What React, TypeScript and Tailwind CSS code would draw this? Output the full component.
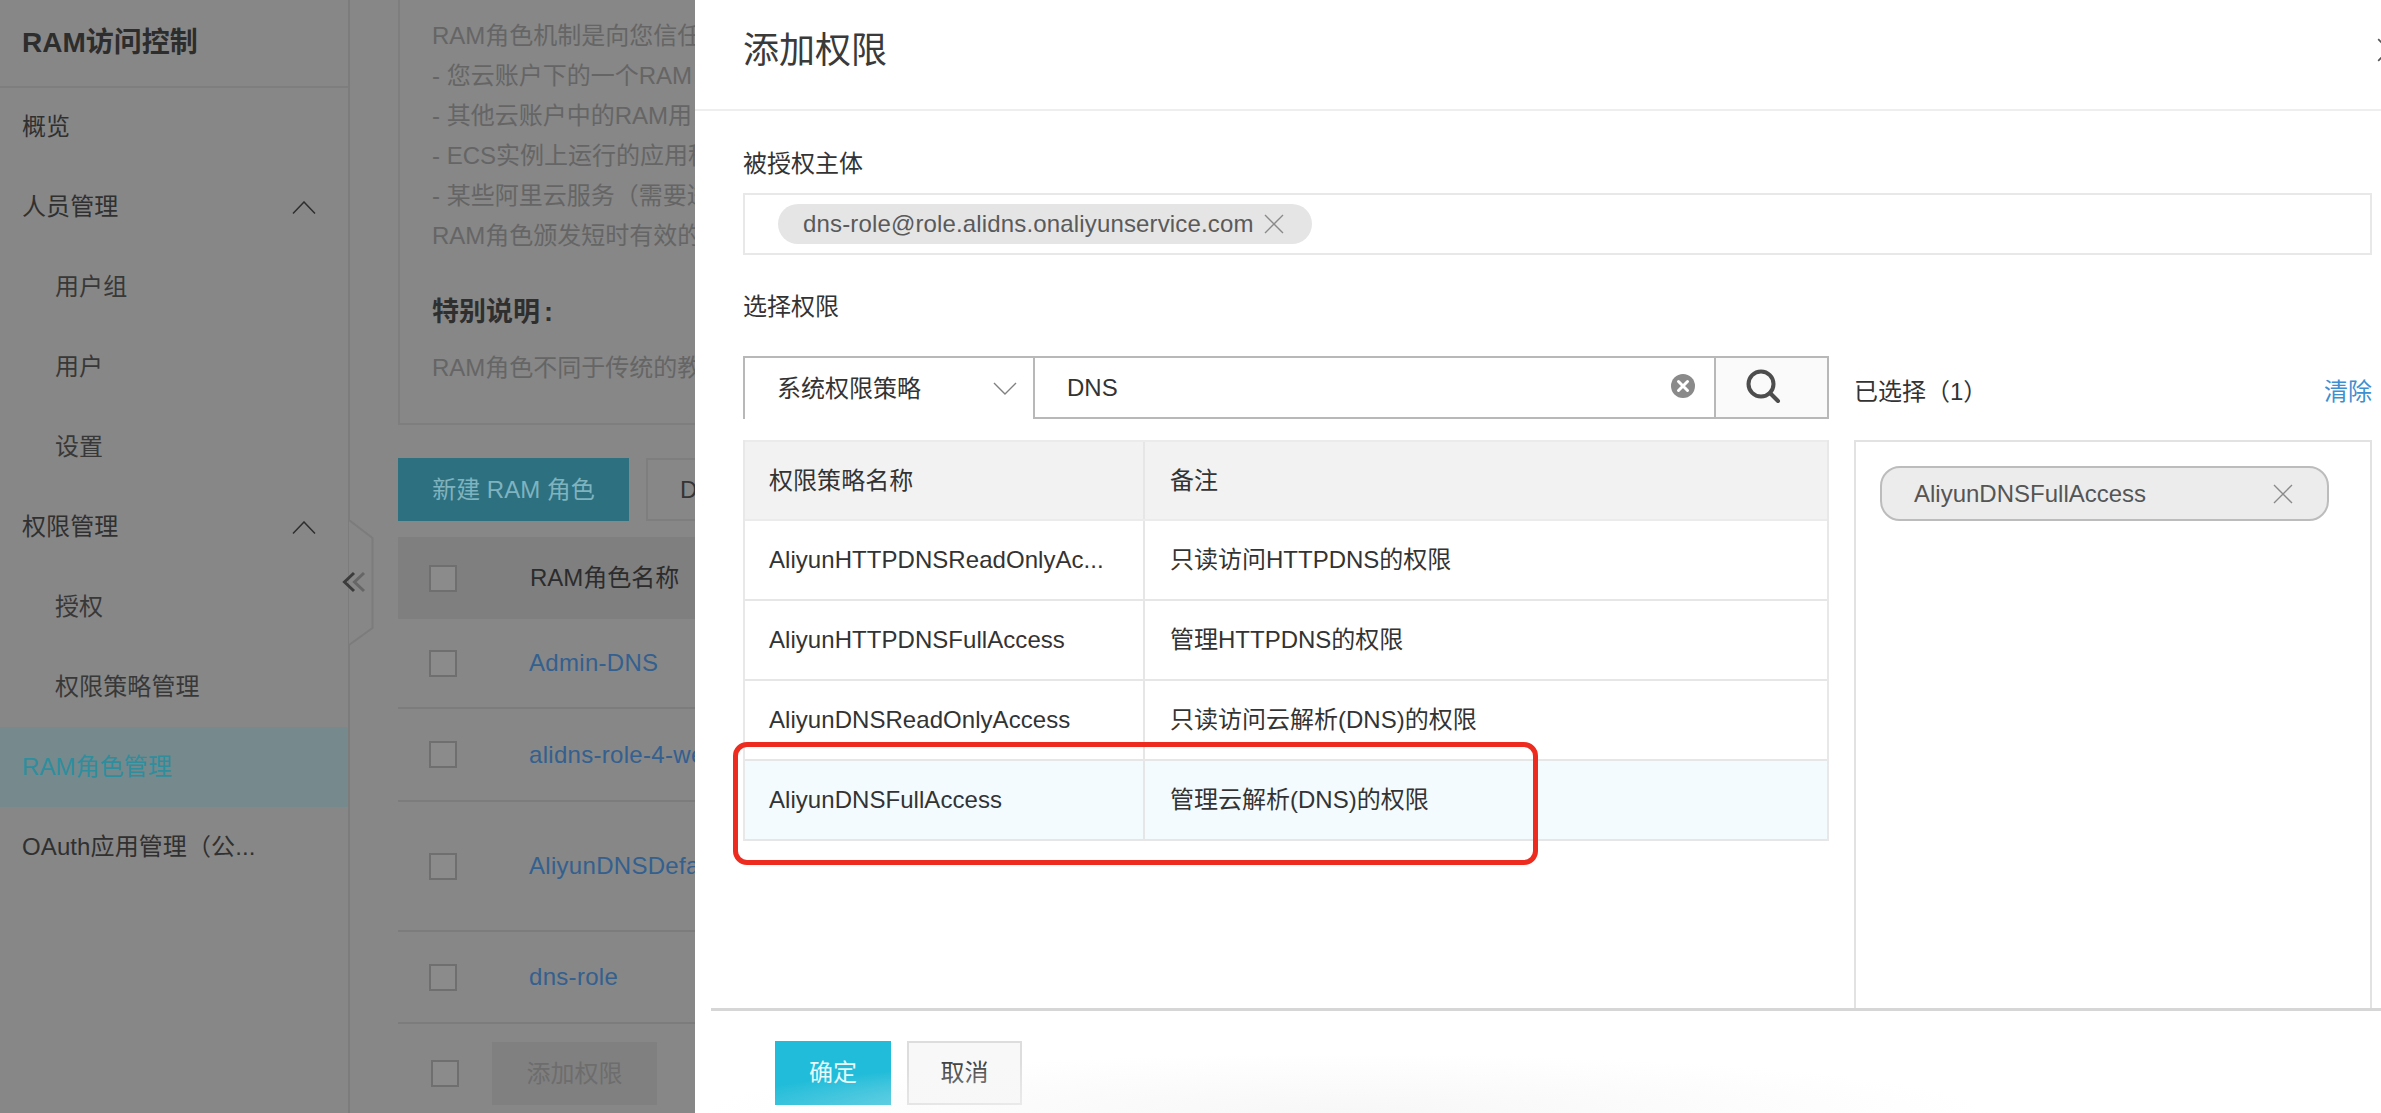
import type { ReactNode } from "react";

const MENU = [
  { label: "概览" },
  { label: "人员管理", open: true },
  { label: "用户组", sub: true },
  { label: "用户", sub: true },
  { label: "设置", sub: true },
  { label: "权限管理", open: true },
  { label: "授权", sub: true },
  { label: "权限策略管理", sub: true },
  { label: "RAM角色管理", active: true },
  { label: "OAuth应用管理（公..." },
];

const ROLES = [
  { name: "Admin-DNS", h: "h-[90px]" },
  { name: "alidns-role-4-web", h: "h-[93px]" },
  { name: "AliyunDNSDefaultRole", h: "h-[130px]" },
  { name: "dns-role", h: "h-[92px]" },
];

const POLICIES = [
  { name: "AliyunHTTPDNSReadOnlyAc...", note: "只读访问HTTPDNS的权限" },
  { name: "AliyunHTTPDNSFullAccess", note: "管理HTTPDNS的权限" },
  { name: "AliyunDNSReadOnlyAccess", note: "只读访问云解析(DNS)的权限" },
  { name: "AliyunDNSFullAccess", note: "管理云解析(DNS)的权限", picked: true },
];

// the drawer covers the rest of these lines
const INTRO = [
  "RAM角色机制是向您信任",
  "- 您云账户下的一个RAM",
  "- 其他云账户中的RAM用",
  "- ECS实例上运行的应用程",
  "- 某些阿里云服务（需要进",
  "RAM角色颁发短时有效的访",
];

function Thin({ size = 20, className = "" }: { size?: number; className?: string }) {
  return (
    <svg width={size} height={size} viewBox="0 0 20 20" fill="none" stroke="currentColor" strokeWidth="1.4" className={className}>
      <path d="M1 1 19 19M19 1 1 19" />
    </svg>
  );
}

function Box() {
  return <span className="h-[27px] w-[28px] shrink-0 border-2 border-[#6f6f6f] bg-[#8b8b8b]" />;
}

function Cell({ children, first }: { children: ReactNode; first?: boolean }) {
  return (
    <div className={first ? "flex w-[400px] shrink-0 items-center border-r-2 border-[#e6e6e6] pl-[24px] tracking-[0.05px]" : "flex flex-1 items-center pl-[25px]"}>
      {children}
    </div>
  );
}

function Sidebar() {
  return (
    <aside className="relative w-[350px] shrink-0 border-r-2 border-[#7c7c7c]">
      <div className="mb-[-1px] flex h-[88px] items-center border-b-2 border-[#7e7e7e] pl-[22px] text-[28px] font-bold text-[#2d2d2d]">
        RAM访问控制
      </div>
      {MENU.map((m) => (
        <div
          key={m.label}
          className={`flex h-[80px] items-center justify-between pr-[32px] ${m.sub ? "pl-[55px] text-[#383838]" : "pl-[22px] text-[#303030]"} ${m.active ? "bg-[#76898c] !text-[#2e8e9e]" : ""}`}
        >
          <span className="tracking-[0.1px]">{m.label}</span>
          {m.open && (
            <svg width="24" height="13" viewBox="0 0 24 13" fill="none" stroke="#2e2e2e" strokeWidth="1.5">
              <path d="M1 12.5 12 1l11 11.5" />
            </svg>
          )}
        </div>
      ))}
      {/* collapse handle that sticks out of the sidebar edge */}
      <svg width="40" height="130" viewBox="0 0 40 130" className="absolute left-[337px] top-[518px]">
        <path d="M12 2 35.500 20V110L12 127" fill="#878787" stroke="#7c7c7c" strokeWidth="2" />
        <path d="M17 55 7.500 64 17 73" fill="none" stroke="#3c3c3c" strokeWidth="3" />
        <path d="M27 55 17.500 64 27 73" fill="none" stroke="#666" strokeWidth="3" />
      </svg>
    </aside>
  );
}

function MainPage() {
  return (
    <main className="min-w-0 flex-1 pl-[48px]">
      <div className="h-[425px] border-x-2 border-b-2 border-[#7e7e7e] pl-[32px] pt-4 text-[#656565]">
        {INTRO.map((line) => (
          <p key={line} className="h-10 leading-10 whitespace-nowrap">{line}</p>
        ))}
        <p className="mt-9 h-10 text-[27px] leading-10 font-bold text-[#2f2f2f]">
          特别说明<span className="ml-1">:</span>
        </p>
        <p className="mt-4 h-10 leading-10 whitespace-nowrap">RAM角色不同于传统的教科</p>
      </div>
      <div className="mt-[33px] flex h-[63px] gap-[17px]">
        <div className="flex w-[231px] items-center justify-center bg-[#2d7080] text-[#7fb3bf]">新建 RAM 角色</div>
        <div className="flex w-[150px] items-center border-2 border-[#7e7e7e] pl-[32px] text-[#353535]">DNS</div>
      </div>
      <div className="mt-4 flex h-[82px] items-center bg-[#7f7f7f] pl-[31px]">
        <Box />
        <span className="ml-[73px] text-[#2c2c2c]">RAM角色名称</span>
      </div>
      {ROLES.map((r) => (
        <div key={r.name} className={`flex items-center border-b-2 border-[#7c7c7c] pl-[31px] ${r.h}`}>
          <Box />
          <span className="ml-[72px] whitespace-nowrap tracking-[0.3px] text-[#33608f]">{r.name}</span>
        </div>
      ))}
      <div className="flex items-center pl-[33px] pt-[18px]">
        <Box />
        <span className="ml-[33px] flex h-[63px] w-[165px] items-center justify-center bg-[#808080] text-[#6d6d6d]">添加权限</span>
      </div>
    </main>
  );
}

function PermissionPanel() {
  return (
    <section className="absolute inset-y-0 left-[695px] right-0 flex flex-col overflow-hidden bg-white text-[#333]">
      <header className="relative flex h-[111px] shrink-0 items-center border-b-2 border-[#eeeeee] pb-2 pl-[48px] text-[36px] text-[#3a3a3a]">
        添加权限
        <Thin size={24} className="absolute left-[1682px] top-[38px] text-[#555]" />
      </header>

      <div className="flex min-h-0 flex-1 flex-col pl-[48px] pr-[9px]">
        <p className="mt-[35px] h-9 leading-9">被授权主体</p>
        <div className="mt-[11px] flex h-[62px] items-center border-2 border-[#e8e8e8] pl-[33px]">
          <span className="flex h-10 items-center gap-[10px] rounded-full bg-[#e5e5e5] pl-[25px] pr-[28px] tracking-[0.15px] text-[#5a5a5a]">
            dns-role@role.alidns.onaliyunservice.com
            <Thin className="text-[#8a8a8a]" />
          </span>
        </div>
        <p className="mt-[34px] h-9 leading-9">选择权限</p>

        <div className="mt-[31px] flex min-h-0 flex-1 gap-[25px]">
          <div className="flex w-[1086px] shrink-0 flex-col">
            <div className="flex h-[63px] shrink-0">
              <div className="flex w-[290px] items-center justify-between border-l-2 border-t-2 border-[#b8b8b8] pl-[32px] pr-[16px]">
                系统权限策略
                <svg width="24" height="13" viewBox="0 0 24 13" fill="none" stroke="#808080" strokeWidth="1.4">
                  <path d="M1 1 12 12 23 1" />
                </svg>
              </div>
              <div className="flex flex-1 items-center justify-between border-2 border-r-0 border-[#b8b8b8] pl-[32px] pr-[19px]">
                DNS
                <svg width="24" height="24" viewBox="0 0 24 24" className="-mt-1">
                  <circle cx="12" cy="12" r="12" fill="#8a8a8a" />
                  <path d="M7.500 7.500l9 9M16.500 7.500l-9 9" stroke="#fff" strokeWidth="3" strokeLinecap="round" />
                </svg>
              </div>
              <div className="flex w-[115px] items-center justify-center border-2 border-[#b8b8b8] bg-[#fafafa] pr-[17px]">
                <svg width="36" height="36" viewBox="0 0 36 36" fill="none" stroke="#4d4d4d" strokeWidth="4" strokeLinecap="round" className="-mt-1">
                  <circle cx="16" cy="16" r="12.500" />
                  <path d="M25 25 33 33" />
                </svg>
              </div>
            </div>

            <div className="mt-[21px] border-x-2 border-[#e8e8e8]">
              <div className="flex h-[81px] border-y-2 border-[#ebebeb] bg-[#f2f2f2]">
                <Cell first>权限策略名称</Cell>
                <Cell>备注</Cell>
              </div>
              {POLICIES.map((p) => (
                <div key={p.name} className={`flex h-[80px] border-b-2 border-[#e6e6e6] ${p.picked ? "bg-[#f3fbfe]" : ""}`}>
                  <Cell first>{p.name}</Cell>
                  <Cell>{p.note}</Cell>
                </div>
              ))}
            </div>
          </div>

          <div className="flex min-w-0 flex-1 flex-col">
            <div className="flex h-[63px] shrink-0 items-center justify-between pt-2">
              <span>已选择（1）</span>
              <span className="text-[#3d8fd1]">清除</span>
            </div>
            <div className="mt-[21px] flex-1 border-x-2 border-t-2 border-[#e2e2e2] pl-[24px] pt-[24px]">
              <div className="flex h-[55px] w-[449px] items-center justify-between rounded-[20px] border-2 border-[#bcbcbc] bg-[#ececec] pl-[32px] pr-[34px] text-[#555]">
                AliyunDNSFullAccess
                <Thin className="text-[#8a8a8a]" />
              </div>
            </div>
          </div>
        </div>
      </div>

      <footer className="relative ml-4 flex h-[105px] shrink-0 gap-4 border-t-[3px] border-[#d6d6d6] pl-[64px] pt-[30px]">
        <span className="flex h-[64px] w-[116px] items-center justify-center bg-[#20bcd9] text-[#e6f8fb]">确定</span>
        <span className="flex h-[64px] w-[115px] items-center justify-center border-2 border-[#dddddd] bg-[#f8f8f8] text-[#444]">取消</span>
      </footer>

      {/* soft shadow along the bottom edge of the shot */}
      <div className="pointer-events-none absolute bottom-0 left-0 h-[60px] w-[1300px] bg-[radial-gradient(ellipse_at_bottom,#f7f7f7_0%,#ffffff00_70%)]" />
      {/* red annotation drawn over the screenshot */}
      <div className="absolute left-[38px] top-[742px] h-[123px] w-[805px] rounded-[14px] border-[5px] border-[#ee2b1f]" />
    </section>
  );
}

export default function App() {
  return (
    <div className="relative flex h-[1113px] w-[2381px] overflow-hidden bg-[#878787] text-[24px] [font-family:'Liberation_Sans','Noto_Sans_CJK_SC',sans-serif]">
      <Sidebar />
      <MainPage />
      <PermissionPanel />
    </div>
  );
}
